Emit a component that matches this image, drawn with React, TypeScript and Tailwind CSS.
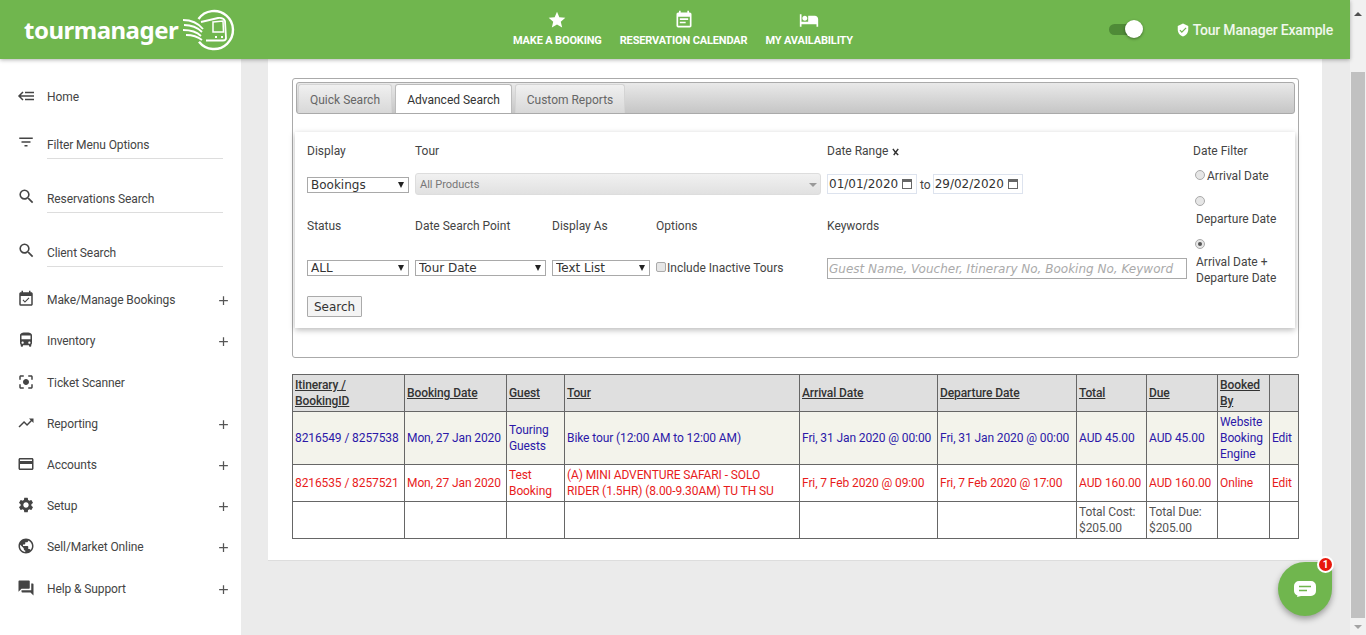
import type { ReactNode } from "react";
import {
  MdAdd,
  MdCenterFocusStrong,
  MdCreditCard,
  MdDirectionsBus,
  MdEventAvailable,
  MdEventNote,
  MdFilterList,
  MdForum,
  MdHotel,
  MdPublic,
  MdSearch,
  MdSettings,
  MdStar,
  MdTrendingUp,
  MdVerifiedUser,
} from "react-icons/md";

function HomeIcon() {
  return (
    <svg width="18" height="18" viewBox="0 0 18 18" fill="none" stroke="currentColor" strokeWidth="1.5">
      <path d="M6 5 2 9l4 4M2 9h15M8 5.500h9M8 12.500h9" />
    </svg>
  );
}

const menuItems = [
  { label: "Home", icon: <HomeIcon />, top: "mt-[27px]" },
  { label: "Filter Menu Options", icon: <MdFilterList size={18} />, top: "mt-[28px]", line: true, raised: true },
  { label: "Reservations Search", icon: <MdSearch size={19} />, top: "mt-[34px]", line: true, raised: true },
  { label: "Client Search", icon: <MdSearch size={19} />, top: "mt-[34px]", line: true, raised: true },
  { label: "Make/Manage Bookings", icon: <MdEventAvailable size={18} />, top: "mt-[27px]", plus: true },
  { label: "Inventory", icon: <MdDirectionsBus size={18} />, top: "mt-[21px]", plus: true },
  { label: "Ticket Scanner", icon: <MdCenterFocusStrong size={18} />, top: "mt-[22px]" },
  { label: "Reporting", icon: <MdTrendingUp size={18} />, top: "mt-[21px]", plus: true },
  { label: "Accounts", icon: <MdCreditCard size={18} />, top: "mt-[21px]", plus: true },
  { label: "Setup", icon: <MdSettings size={18} />, top: "mt-[21px]", plus: true },
  { label: "Sell/Market Online", icon: <MdPublic size={18} />, top: "mt-[21px]", plus: true },
  { label: "Help & Support", icon: <MdForum size={18} />, top: "mt-[22px]", plus: true },
];

function Logo() {
  return (
    <div className="flex items-center">
      <span className="font-['Noto_Sans',sans-serif] text-[24px] font-bold leading-none tracking-[-0.5px] text-white">
        tourmanager
      </span>
      <svg width="62" height="46" viewBox="0 0 62 46" fill="none" stroke="white" className="-ml-[4px]">
        <path d="M24.500 12A19 19 0 1 1 25 34.700" strokeWidth="2.400" />
        <path d="M9 13c8 0 15 3 20 9M10 18c7 0 13 2 18 7M9 23c7 0 13 1 18 6M12 28c6 0 11 1 16 5" strokeWidth="1.800" />
        <path d="M27 15l17-4c3-.5 6 .5 7 3l1 17c0 1.500-1 2.500-3 2.500H32" strokeWidth="1.800" />
        <path d="M39 15l10-1 .5 11H39z" strokeWidth="1.500" />
        <path d="M41 30h2M47 30h2" strokeWidth="2.200" />
      </svg>
    </div>
  );
}

function NavLink({ icon, label }: { icon: ReactNode; label: string }) {
  return (
    <div className="flex flex-col items-center gap-[4px] text-white">
      {icon}
      <span className="text-[11px] font-bold leading-[14px] tracking-[-0.15px]">{label}</span>
    </div>
  );
}

function Header() {
  return (
    <header className="relative z-10 flex h-[59px] shrink-0 items-center bg-[#70b64e] pr-[17px] pl-[24px] shadow-[0_1px_4px_rgba(0,0,0,0.3)]">
      <div className="w-[489px]">
        <Logo />
      </div>
      <div className="-mt-[1px] flex gap-[18px]">
        <NavLink icon={<MdStar size={20} />} label="MAKE A BOOKING" />
        <NavLink icon={<MdEventNote size={20} />} label="RESERVATION CALENDAR" />
        <NavLink icon={<MdHotel size={20} />} label="MY AVAILABILITY" />
      </div>
      <div className="ml-auto flex items-center">
        <div className="relative mr-[42px] h-[11px] w-[25px] rounded-full bg-[#4f8a37]">
          <div className="absolute top-[-4px] right-[-9px] h-[18px] w-[18px] rounded-full bg-white shadow-[0_1px_3px_rgba(0,0,0,0.4)]" />
        </div>
        <MdVerifiedUser size={14} className="text-white" />
        <span className="ml-[3px] text-[14px] font-medium leading-[20px] tracking-[-0.2px] text-white/90">
          Tour Manager Example
        </span>
      </div>
    </header>
  );
}

function Sidebar() {
  return (
    <aside className="w-[241px] shrink-0 bg-white text-[#444]">
      {menuItems.map((item) => (
        <div key={item.label} className={`${item.top} flex h-[20px] items-center pl-[17px]`}>
          <span className={item.raised ? "-mt-[4px] flex w-[30px] shrink-0" : "flex w-[30px] shrink-0"}>
            {item.icon}
          </span>
          <div className="relative flex-1 pr-[18px]">
            <span className="text-[12px] leading-[20px] tracking-[-0.1px]">{item.label}</span>
            {item.line && <div className="absolute top-[26px] right-[18px] left-0 h-px bg-[#ddd]" />}
            {item.plus && (
              <MdAdd size={15} className="absolute top-[6px] right-[10px] text-[#555]" />
            )}
          </div>
        </div>
      ))}
    </aside>
  );
}

function Select({ value, width }: { value: string; width: string }) {
  return (
    <div className={`relative h-[16px] ${width}`}>
      <select
        defaultValue={value}
        className="block h-[16px] w-full appearance-none rounded-none border border-[#a9a9a9] bg-white pl-[3px] font-['DejaVu_Sans',sans-serif] text-[12px] leading-[14px] text-[#333]"
      >
        <option>{value}</option>
      </select>
      <span className="absolute top-[5px] right-[5px] h-0 w-0 border-x-[3.500px] border-t-[6px] border-x-transparent border-t-[#222]" />
    </div>
  );
}

function DateBox({ value }: { value: string }) {
  return (
    <div className="flex h-[20px] w-[90px] items-center border border-[#dde3ee] pl-[1px] font-['DejaVu_Sans',sans-serif] text-[12px] text-[#333]">
      <span>{value}</span>
      <svg width="12" height="12" viewBox="0 0 12 12" className="ml-[3px]" fill="none" stroke="#666">
        <rect x="1.500" y="1.500" width="9" height="9" fill="white" />
        <path d="M1.500 3h9" strokeWidth="2" />
      </svg>
    </div>
  );
}

function Radio({ checked }: { checked?: boolean }) {
  return (
    <span className="flex h-[10px] w-[10px] items-center justify-center rounded-full border border-[#aaa] bg-[#e6e6e6]">
      {checked && <span className="h-[4px] w-[4px] rounded-full bg-[#555]" />}
    </span>
  );
}

function SearchPanel() {
  return (
    <section className="h-[280px] w-[1007px] rounded-[3px] border border-[#aaa] pt-[3px] pr-[3px] pl-[2px]">
      <div className="ml-[1px] flex h-[32px] items-end gap-[3px] rounded-[3px] border border-[#aaa] bg-gradient-to-b from-[#e9e9e9] to-[#c6c6c6] pl-[1px] text-[12px]">
        {[
          { label: "Quick Search", w: "w-[94px]", on: false },
          { label: "Advanced Search", w: "w-[117px]", on: true },
          { label: "Custom Reports", w: "w-[110px]", on: false },
        ].map((tab) => (
          <div
            key={tab.label}
            className={
              tab.on
                ? `${tab.w} flex h-[29px] items-center justify-center rounded-t-[3px] border border-b-0 border-[#bbb] bg-white pt-[2px] text-[#333]`
                : `${tab.w} flex h-[29px] items-center justify-center rounded-t-[3px] border border-b-0 border-[#d4d4d4] bg-gradient-to-b from-[#f0f0f0] to-[#d8d8d8] pt-[2px] text-[#666]`
            }
          >
            {tab.label}
          </div>
        ))}
      </div>
      <div className="mt-[18px] flex h-[196px] bg-white pl-[12px] text-[12px] text-[#444] shadow-[0_2px_6px_rgba(0,0,0,0.28)]">
        <div className="grid w-[886px] grid-cols-[108px_137px_104px_171px_366px] grid-rows-[38px_42px_42px_40px_34px]">
          <div className="pt-[11px] leading-[16px]">Display</div>
          <div className="col-span-3 pt-[11px] leading-[16px]">Tour</div>
          <div className="flex items-start gap-[4px] pt-[11px] leading-[16px]">
            Date Range
            <svg width="8" height="8" viewBox="0 0 9 9" className="mt-[5px]" fill="none" stroke="#333" strokeWidth="1.600">
              <path d="M1 1l3 4 3-4M2 8l2-3 3 3" />
            </svg>
          </div>

          <div className="pt-[7px]">
            <Select value="Bookings" width="w-[102px]" />
          </div>
          <div className="col-span-3 pt-[3px]">
            <div className="flex h-[22px] w-[406px] items-center justify-between rounded-[3px] border border-[#ddd] bg-gradient-to-b from-[#f1f1f1] to-[#e1e1e1] pt-[2px] pr-[3px] pl-[4px] text-[11px] text-[#777]">
              All Products
              <span className="h-0 w-0 border-x-[4px] border-t-[4px] border-x-transparent border-t-[#999]" />
            </div>
          </div>
          <div className="flex items-start pt-[4px] text-[#444]">
            <DateBox value="01/01/2020" />
            <span className="mr-[2px] ml-[3px] pt-[2px]">to</span>
            <DateBox value="29/02/2020" />
          </div>

          <div className="pt-[6px] leading-[16px]">Status</div>
          <div className="pt-[6px] leading-[16px]">Date Search Point</div>
          <div className="pt-[6px] leading-[16px]">Display As</div>
          <div className="pt-[6px] leading-[16px]">Options</div>
          <div className="pt-[6px] leading-[16px]">Keywords</div>

          <div className="pt-[6px]">
            <Select value="ALL" width="w-[102px]" />
          </div>
          <div className="pt-[6px]">
            <Select value="Tour Date" width="w-[131px]" />
          </div>
          <div className="pt-[6px]">
            <Select value="Text List" width="w-[98px]" />
          </div>
          <div className="flex items-start pt-[6px] leading-[16px]">
            <span className="mt-[2px] h-[10px] w-[10px] rounded-[2px] border border-[#aaa] bg-[#e6e6e6]" />
            <span className="ml-[1px]">Include Inactive Tours</span>
          </div>
          <div className="pt-[4px]">
            <input
              placeholder="Guest Name, Voucher, Itinerary No, Booking No, Keyword"
              className="h-[21px] w-[360px] rounded-none border border-[#aaa] pl-[1px] font-['DejaVu_Sans',sans-serif] text-[12px] italic placeholder:text-[#aaa]"
            />
          </div>

          <div className="col-span-5 pt-[2px]">
            <button className="h-[21px] w-[55px] rounded-[1px] border border-[#aaa] bg-[#f4f4f4] font-['DejaVu_Sans',sans-serif] text-[12px] text-[#333]">
              Search
            </button>
          </div>
        </div>
        <div className="w-[90px] pt-[11px] leading-[16px]">
          <div>Date Filter</div>
          <div className="mt-[9px] flex items-start">
            <span className="mt-[2px] ml-[2px]">
              <Radio />
            </span>
            <span className="ml-[2px]">Arrival Date</span>
          </div>
          <div className="mt-[12px] ml-[2px]">
            <Radio />
            <div className="mt-[5px] ml-[1px]">Departure Date</div>
          </div>
          <div className="mt-[12px] ml-[2px]">
            <Radio checked />
            <div className="mt-[5px] ml-[1px]">
              Arrival Date +
              <br />
              Departure Date
            </div>
          </div>
        </div>
      </div>
    </section>
  );
}

const headers: { label: ReactNode; w: string }[] = [
  { label: <>Itinerary / BookingID</>, w: "w-[112px]" },
  { label: "Booking Date", w: "w-[102px]" },
  { label: "Guest", w: "w-[58px]" },
  { label: "Tour", w: "w-[235px]" },
  { label: "Arrival Date", w: "w-[138px]" },
  { label: "Departure Date", w: "w-[139px]" },
  { label: "Total", w: "w-[70px]" },
  { label: "Due", w: "w-[71px]" },
  { label: "Booked By", w: "w-[52px]" },
  { label: "", w: "w-[29px]" },
];

const rows: { cls: string; cells: ReactNode[] }[] = [
  {
    cls: "h-[53px] bg-[#f3f3eb] text-[#2b18a8]",
    cells: [
      "8216549 / 8257538",
      "Mon, 27 Jan 2020",
      "Touring Guests",
      "Bike tour (12:00 AM to 12:00 AM)",
      "Fri, 31 Jan 2020 @ 00:00",
      "Fri, 31 Jan 2020 @ 00:00",
      "AUD 45.00",
      "AUD 45.00",
      "Website Booking Engine",
      "Edit",
    ],
  },
  {
    cls: "h-[37px] text-[#e81c1c]",
    cells: [
      "8216535 / 8257521",
      "Mon, 27 Jan 2020",
      "Test Booking",
      <>
        (A) MINI ADVENTURE SAFARI - SOLO
        <br />
        RIDER (1.5HR) (8.00-9.30AM) TU TH SU
      </>,
      "Fri, 7 Feb 2020 @ 09:00",
      "Fri, 7 Feb 2020 @ 17:00",
      "AUD 160.00",
      "AUD 160.00",
      "Online",
      "Edit",
    ],
  },
  {
    cls: "h-[37px] text-[#555]",
    cells: ["", "", "", "", "", "", "Total Cost: $205.00", "Total Due: $205.00", "", ""],
  },
];

function ResultsTable() {
  return (
    <table className="mt-[16px] w-[1007px] table-fixed border-collapse text-[12px] leading-[16px] tracking-[-0.1px]">
      <thead>
        <tr className="h-[37px] bg-[#dfdfdf] text-[#333]">
          {headers.map((h, i) => (
            <th key={i} className={`${h.w} border border-[#666] px-[2px] text-left font-medium underline`}>
              {h.label}
            </th>
          ))}
        </tr>
      </thead>
      <tbody>
        {rows.map((row, r) => (
          <tr key={r} className={row.cls}>
            {row.cells.map((cell, c) => (
              <td key={c} className="border border-[#666] px-[2px]">
                {cell}
              </td>
            ))}
          </tr>
        ))}
      </tbody>
    </table>
  );
}

function ChatButton() {
  return (
    <div className="absolute top-[562px] left-[1278px] z-20 flex h-[54px] w-[54px] items-center justify-center rounded-full rounded-tr-[6px] bg-[#70b64e] shadow-[0_3px_6px_rgba(0,0,0,0.35)]">
      <svg width="22" height="16" viewBox="0 0 22 16">
        <path d="M5 0h12a5 5 0 0 1 5 5v5a5 5 0 0 1-5 5H7l-4 1 .5-1.500A5 5 0 0 1 0 10V5a5 5 0 0 1 5-5z" fill="white" />
        <path d="M5 5.500h12M5 9.500h8" stroke="#70b64e" strokeWidth="1.600" />
      </svg>
      <span className="absolute top-[-6px] right-[-2px] flex h-[17px] w-[17px] items-center justify-center rounded-full border-2 border-white bg-[#e8180c] text-[10px] leading-none font-bold text-white">
        1
      </span>
    </div>
  );
}

function Scrollbar() {
  return (
    <div className="flex h-full w-[16px] shrink-0 flex-col items-center bg-[#f1f1f1]">
      <div className="flex h-[16px] items-end pt-[6px]">
        <span className="h-0 w-0 border-x-[4px] border-b-[4px] border-x-transparent border-b-[#505050]" />
      </div>
      <div className="mt-[56px] h-[546px] w-[14px] bg-[#c1c1c1]" />
      <div className="flex h-[17px] items-center">
        <span className="h-0 w-0 border-x-[4px] border-t-[4px] border-x-transparent border-t-[#a3a3a3]" />
      </div>
    </div>
  );
}

export default function App() {
  return (
    <div className="relative flex h-[635px] w-[1366px] overflow-hidden bg-[#ebebeb] font-['Roboto',sans-serif]">
      <div className="flex min-w-0 flex-1 flex-col">
        <Header />
        <div className="flex flex-1">
          <Sidebar />
          <main className="flex-1 pl-[27px]">
            <div className="h-[502px] w-[1054px] border-b border-[#ddd] bg-white pt-[19px] pl-[24px]">
              <SearchPanel />
              <ResultsTable />
            </div>
          </main>
        </div>
      </div>
      <Scrollbar />
      <ChatButton />
    </div>
  );
}
